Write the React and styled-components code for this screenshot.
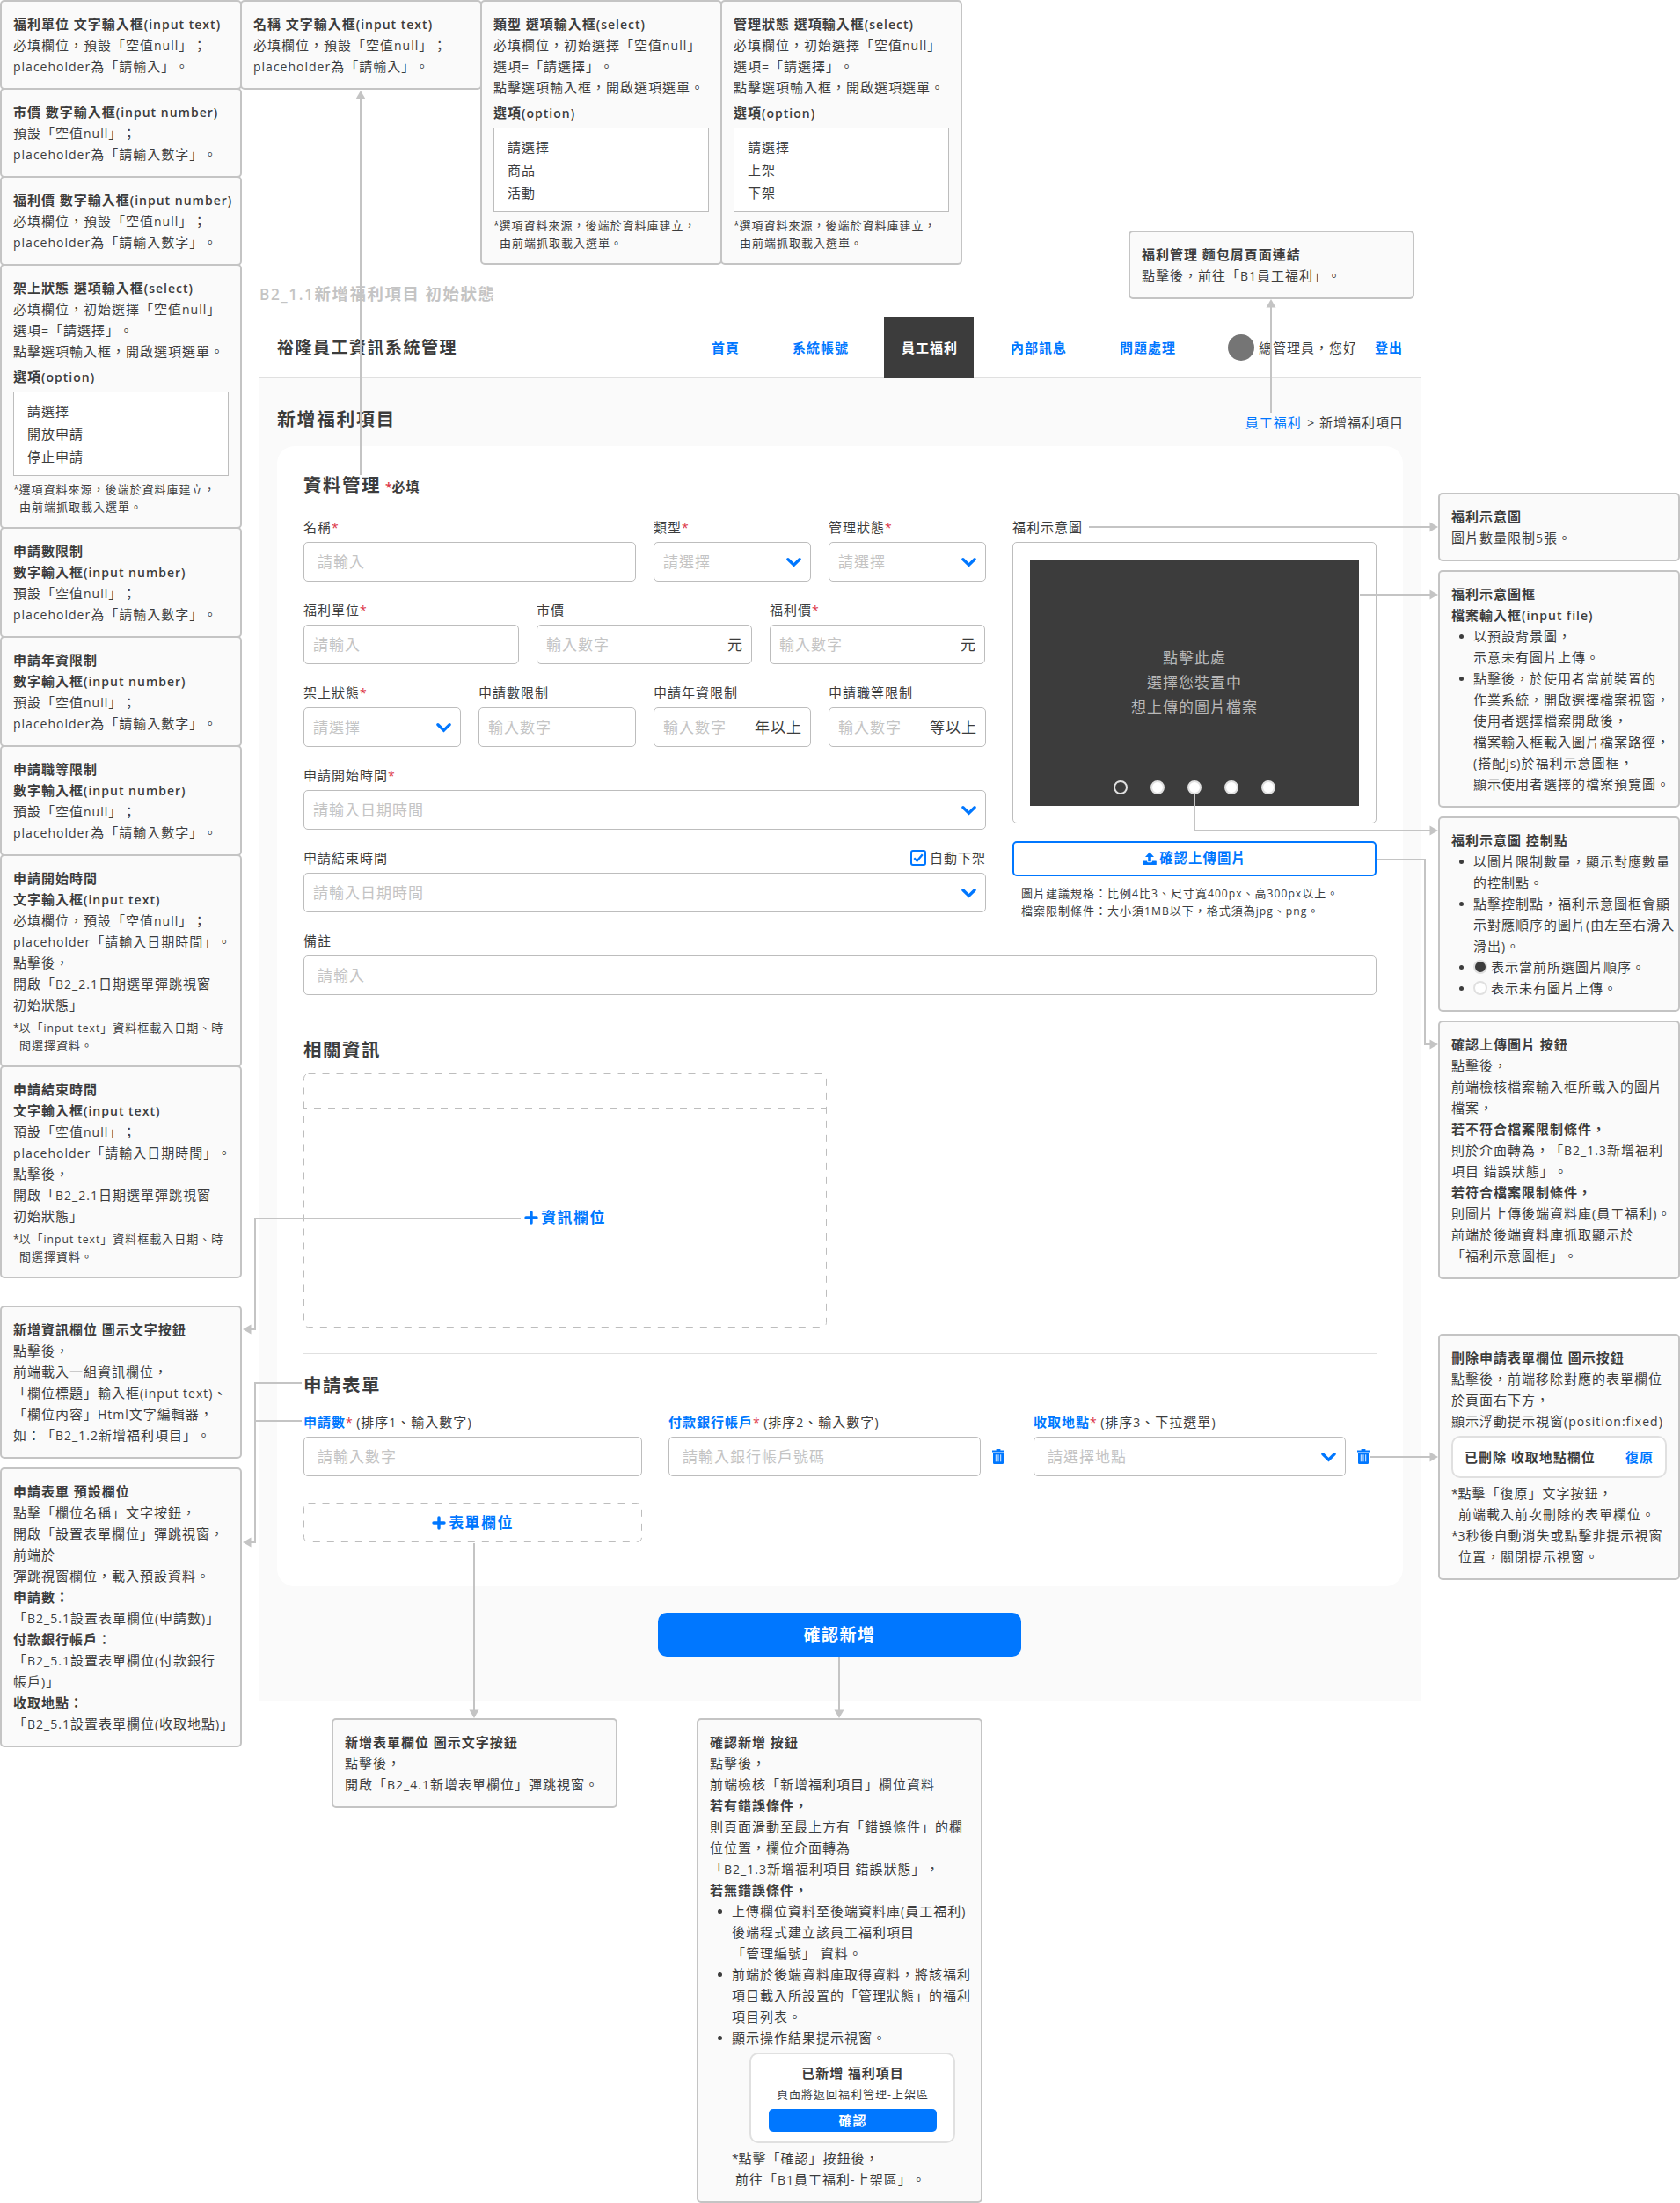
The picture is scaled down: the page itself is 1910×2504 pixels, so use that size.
import React from 'react';
import styled, { createGlobalStyle, css } from 'styled-components';

const ink = '#3c3c3c';
const blue = '#0077ff';
const line = '#c4c4c4';
const edge = '#bdbdbd';
const soft = '#e0e0e0';
const wash = '#fafafa';
const red = '#dc3545';

const GlobalStyle = createGlobalStyle`
  * { box-sizing: border-box; }
  body {
    margin: 0;
    background: #fff;
    color: ${ink};
    font-family: "Open Sans", "Noto Sans CJK TC", sans-serif;
    font-size: 15px;
    line-height: 24px;
    letter-spacing: 1px;
    white-space: nowrap;
    text-spacing-trim: space-all;
  }
`;

/* ---------- text ---------- */

const Latin = styled.span`
  font-size: 0.935em;
  line-height: 1;
  white-space: pre;
`;

const Star = styled.span`
  font-size: 0.935em;
  line-height: 1;
  letter-spacing: -0.2px;
  color: ${(p) => (p.$required ? red : 'inherit')};
`;

function Mixed({ text }) {
  return text
    .split(/(\*|[ -)+-~]+)/)
    .filter(Boolean)
    .map((part, i) => {
      if (part === '*') return <Star key={i}>*</Star>;
      if (/^[ -~]/.test(part)) return <Latin key={i}>{part}</Latin>;
      return <React.Fragment key={i}>{part}</React.Fragment>;
    });
}

/* ---------- board ---------- */

const Board = styled.div`
  position: relative;
  width: 1910px;
  height: 2504px;
  display: flex;
  align-items: flex-start;
  overflow: hidden;
`;

const LeftColumn = styled.div`
  width: 275px;
  flex: none;
  display: flex;
  flex-direction: column;
`;

const Stack = styled.div`
  display: flex;
  flex-direction: column;
  margin-bottom: ${(p) => p.$after || 0}px;
  > * + * { margin-top: ${(p) => p.$gap}px; }
`;

const CenterColumn = styled.div`
  width: 1362px;
  flex: none;
  margin-left: -2px;
  display: flex;
  flex-direction: column;
`;

const RightColumn = styled.div`
  width: 275px;
  flex: none;
  padding-top: 560px;
`;

const TopNotes = styled.div`
  display: flex;
  align-items: flex-start;
  height: 320px;
  > * + * { margin-left: -2px; }
`;

const BreadcrumbNoteSlot = styled.div`
  && { margin: 262px 0 0 189px; }
`;

const BottomNotes = styled.div`
  display: flex;
  align-items: flex-start;
  gap: 90px;
  padding: 20px 0 0 104px;
`;

const Caption = styled.div`
  height: 40px;
  padding-left: 22px;
  font-size: 18.4px;
  line-height: 27px;
  letter-spacing: 1.6px;
  font-weight: 600;
  color: ${line};
`;

/* ---------- notes ---------- */

const Note = styled.section`
  flex: none;
  width: ${(p) => (p.$wide ? 325 : 275)}px;
  padding: 13px;
  border: 2px solid ${line};
  border-radius: 5px;
  background: ${wash};
`;

const NoteTitle = styled.div`
  height: 24px;
  font-weight: 600;
  margin-top: ${(p) => (p.$spaced ? 5 : 0)}px;
`;

const NoteLine = styled.div`
  height: 24px;
  padding-left: ${(p) => p.$indent || 0}px;
`;

const Fine = styled.div`
  margin-top: 4px;
  font-size: 13px;
  line-height: 20px;
`;

const FineLine = styled.div`
  height: 20px;
  padding-left: ${(p) => (p.$hang ? 7 : 0)}px;
`;

const OptionBox = styled.div`
  height: 96px;
  margin: 5px 0;
  padding: 8px 15px;
  border: 1px solid ${edge};
  background: #fff;
  line-height: 26px;
`;

const BulletItem = styled.div`
  display: grid;
  grid-template-columns: 25px 1fr;
`;

const BulletDot = styled.span`
  width: 5px;
  height: 5px;
  margin: 10px 0 0 9px;
  border-radius: 50%;
  background: ${ink};
`;

const StateLine = styled.div`
  display: flex;
  align-items: center;
  gap: 4px;
  height: 24px;
`;

const Dot = styled.span`
  flex: none;
  width: 16px;
  height: 16px;
  border-radius: 50%;
  border: 2px solid ${soft};
  background: ${(p) => (p.$dark ? ink : '#fff')};
`;

const Toast = styled.div`
  display: flex;
  align-items: center;
  justify-content: space-between;
  height: 48px;
  margin: 5px 0;
  padding: 0 13px;
  border: 2px solid ${soft};
  border-radius: 10px;
  background: #fff;
  font-weight: 600;
`;

const TextLink = styled.span`
  color: ${blue};
`;

const MiniDialog = styled.div`
  width: 234px;
  height: 103px;
  margin: 5px 0 5px 45px;
  padding: 9px 19px 10px 20px;
  border: 2px solid ${soft};
  border-radius: 10px;
  background: #fff;
  text-align: center;
`;

const MiniTitle = styled.div`
  height: 25px;
  font-weight: 600;
`;

const MiniText = styled.div`
  height: 22px;
  font-size: 13px;
  line-height: 22px;
`;

const MiniButton = styled.div`
  height: 26px;
  margin-top: 6px;
  border-radius: 5px;
  background: ${blue};
  color: #fff;
  font-weight: 600;
  line-height: 26px;
`;

const Heading = ({ children, spaced }) => (
  <NoteTitle $spaced={spaced}><Mixed text={children} /></NoteTitle>
);

const Lines = ({ items, indent }) =>
  items.map((s, i) => (
    <NoteLine key={i} $indent={indent}><Mixed text={s} /></NoteLine>
  ));

const Remark = ({ items }) => (
  <Fine>
    {items.map((s, i) => (
      <FineLine key={i} $hang={i > 0}><Mixed text={s} /></FineLine>
    ))}
  </Fine>
);

const Bullet = ({ items, children }) => (
  <BulletItem>
    <BulletDot />
    <div>{items ? <Lines items={items} /> : children}</div>
  </BulletItem>
);

const FieldNote = ({ titles, lines, remark }) => (
  <Note>
    {titles.map((s) => <Heading key={s}>{s}</Heading>)}
    <Lines items={lines} />
    {remark && <Remark items={remark} />}
  </Note>
);

const SelectNote = ({ title, options }) => (
  <Note>
    <Heading>{title}</Heading>
    <Lines items={['必填欄位，初始選擇「空值null」', '選項=「請選擇」。', '點擊選項輸入框，開啟選項選單。']} />
    <Heading spaced>選項(option)</Heading>
    <OptionBox>
      {options.map((o) => <div key={o}>{o}</div>)}
    </OptionBox>
    <Remark items={['*選項資料來源，後端於資料庫建立，', '由前端抓取載入選單。']} />
  </Note>
);

/* ---------- application frame ---------- */

const Frame = styled.main`
  width: 1320px;
  height: 1573px;
  margin-left: 22px;
  background: ${wash};
`;

const Header = styled.header`
  display: flex;
  align-items: center;
  height: 70px;
  padding: 0 20px;
  border-bottom: 1px solid ${soft};
  background: #fff;
`;

const Brand = styled.div`
  width: 474px;
  font-size: 19px;
  letter-spacing: 1.5px;
  font-weight: 600;
`;

const Nav = styled.nav`
  display: flex;
  gap: 22px;
  height: 70px;
`;

const NavItem = styled.a`
  height: 70px;
  padding: 0 18px 0 20px;
  line-height: 70px;
  font-weight: 600;
  color: ${(p) => (p.$active ? '#fff' : blue)};
  background: ${(p) => (p.$active ? ink : 'transparent')};
`;

const User = styled.div`
  display: flex;
  align-items: center;
  margin-left: auto;
`;

const Avatar = styled.span`
  width: 30px;
  height: 30px;
  margin: 1px 5px 0 0;
  border-radius: 50%;
  background: #757575;
`;

const Logout = styled.a`
  margin-left: 20px;
  color: ${blue};
  font-weight: 600;
`;

const TitleBar = styled.div`
  display: flex;
  justify-content: space-between;
  align-items: center;
  height: 77px;
  padding: 18px 19px 0 20px;
`;

const PageTitle = styled.h1`
  margin: 0 0 4px;
  font-size: 20.8px;
  letter-spacing: 1.7px;
  font-weight: 600;
`;

const Crumbs = styled.div`
  padding-top: 4px;
  a { color: ${blue}; margin-right: 2px; }
`;

const Panel = styled.div`
  width: 1280px;
  height: 1296px;
  margin: 0 20px;
  padding: 0 30px;
  border-radius: 20px;
  background: #fff;
`;

const SectionTitle = styled.h2`
  display: flex;
  align-items: center;
  height: ${(p) => p.$h}px;
  margin: 0;
  padding-top: ${(p) => p.$top || 0}px;
  font-size: 20.5px;
  letter-spacing: 1.5px;
  font-weight: 600;
`;

const RequiredHint = styled.span`
  margin: 4px 0 0 5px;
  font-size: 15px;
  letter-spacing: 1px;
`;

const Divider = styled.hr`
  height: 1px;
  margin: ${(p) => p.$top}px 0 0;
  border: 0;
  background: ${soft};
`;

const FormTop = styled.div`
  display: flex;
  gap: 30px;
  height: 450px;
`;

const Fields = styled.div`
  width: 776px;
  display: flex;
  flex-direction: column;
  gap: 20px;
`;

const Row = styled.div`
  display: grid;
  grid-template-columns: ${(p) => p.$cols};
  gap: 20px;
`;

const Label = styled.div`
  display: flex;
  justify-content: space-between;
  height: 24px;
  margin-bottom: 5px;
`;

const Control = styled.div`
  display: flex;
  align-items: center;
  justify-content: space-between;
  height: 45px;
  padding: 0 10px 0 ${(p) => (p.$roomy ? 15 : 10)}px;
  border: 1px solid ${edge};
  border-radius: 5px;
  background: #fff;
  font-size: 17px;
`;

const Placeholder = styled.span`
  color: ${line};
`;

const Unit = styled.span`
  margin-right: -1px;
`;

const Auto = styled.span`
  display: flex;
  align-items: center;
  gap: 4px;
`;

const Chevron = () => (
  <svg width="17" height="12" viewBox="0 0 17 12" fill="none">
    <path d="M1.900 2.700 8.500 9.200 15.100 2.700" stroke={blue} strokeWidth="3.300" strokeLinecap="round" />
  </svg>
);

const Plus = () => (
  <svg width="16" height="16" viewBox="0 0 16 16">
    <path d="M8 2v12M2 8h12" stroke={blue} strokeWidth="3.400" strokeLinecap="round" />
  </svg>
);

const Checkbox = () => (
  <svg width="18" height="18" viewBox="0 0 18 18" fill="none" stroke={blue} strokeWidth="2">
    <rect x="1" y="1" width="16" height="16" rx="2" />
    <path d="M4.300 9.200 7.600 12.600 13.800 5.200" strokeWidth="2.300" />
  </svg>
);

const Upload = () => (
  <svg width="16" height="16" viewBox="0 0 16 16" fill={blue}>
    <path d="M8 0.500 13 6H9.800v5.200H6.200V6H3z" />
    <path d="M0.800 10.400h4.400v0.900q0 1 1 1h3.600q1 0 1-1v-0.900h4.400q0.600 0 0.600 0.600v3.400q0 0.600-0.600 0.600H0.800q-0.600 0-0.600-0.600V11q0-0.600 0.600-0.600z" />
  </svg>
);

const Trash = () => (
  <svg width="14" height="17" viewBox="0 0 14 17">
    <path d="M4.600 0h4.800v1.400H14v2H0v-2h4.600z" fill={blue} />
    <path d="M1 4.300h12v11.400q0 1.300-1.300 1.300H2.300Q1 17 1 15.700z" fill={blue} />
    <path d="M4.300 6.300v8M7 6.300v8M9.700 6.300v8" stroke="#fff" strokeWidth="0.900" />
  </svg>
);

const FieldLabel = ({ text, required, extra }) => (
  <Label>
    <span>{text}{required && <Star $required>*</Star>}</span>
    {extra}
  </Label>
);

const Field = ({ label, required, hint, unit, select, roomy, extra }) => (
  <div>
    <FieldLabel text={label} required={required} extra={extra} />
    <Control $roomy={roomy}>
      <Placeholder>{hint}</Placeholder>
      {unit && <Unit>{unit}</Unit>}
      {select && <Chevron />}
    </Control>
  </div>
);

const ImageColumn = styled.div`
  width: 414px;
`;

const Preview = styled.div`
  height: 320px;
  padding: 19px;
  border: 1px solid ${edge};
  border-radius: 5px;
`;

const Slide = styled.div`
  display: flex;
  flex-direction: column;
  align-items: center;
  height: 280px;
  padding-top: 98px;
  background: ${ink};
  color: #b8b8b8;
  font-size: 17px;
  line-height: 28px;
`;

const Dots = styled.div`
  display: flex;
  gap: 26px;
  margin-top: 69px;
`;

const UploadButton = styled.div`
  display: flex;
  align-items: center;
  justify-content: center;
  gap: 3px;
  height: 40px;
  margin-top: 20px;
  border: 2px solid ${blue};
  border-radius: 5px;
  color: ${blue};
  font-size: 15.4px;
  font-weight: 600;
`;

const Specs = styled.div`
  margin: 9px 0 0 10px;
  font-size: 13px;
  line-height: 20px;
`;

const RemarkField = styled.div`
  margin-top: 20px;
`;

const dashedBox = css`
  position: relative;
  display: flex;
  color: ${blue};
  font-size: 17px;
  letter-spacing: 1.4px;
  font-weight: 600;
`;

const InfoBox = styled.div`
  ${dashedBox}
  width: 595px;
  height: 289px;
  padding-top: 39px;
`;

const AddFieldBox = styled.div`
  ${dashedBox}
  width: 385px;
  height: 45px;
  margin-top: 30px;
`;

const DashFrame = styled.svg`
  position: absolute;
  inset: 0;
`;

const AddButton = styled.div`
  flex: 1;
  display: flex;
  align-items: center;
  justify-content: center;
  gap: 3px;
`;

const Dashes = ({ w, h, split }) => (
  <DashFrame width={w} height={h} fill="none" stroke={edge} strokeDasharray="8 8">
    <rect x="0.5" y="0.5" width={w - 1} height={h - 1} rx="5" />
    {split && <path d={`M-4 ${split}.5H${w}`} />}
  </DashFrame>
);

const Application = styled.div`
  display: grid;
  grid-template-columns: repeat(3, 385px);
  gap: 30px;
  width: 1215px;
`;

const ApplicationLabel = styled.div`
  height: 24px;
  margin-bottom: 5px;
  b { color: ${blue}; font-weight: 600; }
`;

const ControlRow = styled.div`
  display: grid;
  grid-template-columns: ${(p) => (p.$removable ? '355px 14px' : '385px')};
  align-items: center;
  gap: 13px;
`;

const ApplicationField = ({ name, order, hint, select, removable }) => (
  <div>
    <ApplicationLabel>
      <b>{name}</b><Star $required>*</Star><Mixed text={order} />
    </ApplicationLabel>
    <ControlRow $removable={removable}>
      <Control $roomy>
        <Placeholder>{hint}</Placeholder>
        {select && <Chevron />}
      </Control>
      {removable && <Trash />}
    </ControlRow>
  </div>
);

const Submit = styled.div`
  width: 413px;
  height: 50px;
  margin: 30px 0 0 453px;
  border-radius: 10px;
  background: ${blue};
  color: #fff;
  text-align: center;
  font-size: 19px;
  line-height: 51px;
  letter-spacing: 1.5px;
  font-weight: 600;
`;

/* ---------- connectors between the screen and its notes ---------- */

const ConnectorLayer = styled.svg`
  position: absolute;
  inset: 0;
  pointer-events: none;
`;

const connectors = [
  { d: 'M410 540V112', tip: [410, 103, 'up'] },
  { d: 'M1445 469V349', tip: [1445, 340, 'up'] },
  { d: 'M1238 599H1626', tip: [1635, 599, 'right'] },
  { d: 'M1546 676H1626', tip: [1635, 676, 'right'] },
  { d: 'M1358 902V944H1626', tip: [1635, 944, 'right'] },
  { d: 'M1565 977H1620V1187H1626', tip: [1635, 1187, 'right'] },
  { d: 'M1557 1656H1626', tip: [1635, 1656, 'right'] },
  { d: 'M592 1385H290V1511H285', tip: [276, 1511, 'left'] },
  { d: 'M343 1572H290V1753H285M290 1615H343', tip: [276, 1753, 'left'] },
  { d: 'M539 1754V1944', tip: [539, 1953, 'down'] },
  { d: 'M954 1883V1944', tip: [954, 1953, 'down'] },
];

const turn = { up: 0, right: 90, down: 180, left: 270 };

const Connectors = () => (
  <ConnectorLayer width="1910" height="2504">
    {connectors.map(({ d, tip: [x, y, dir] }) => (
      <g key={d}>
        <path d={d} fill="none" stroke={line} strokeWidth="2" />
        <path d="M0 0 5.500 9.500H-5.500z" fill={line} transform={`translate(${x} ${y}) rotate(${turn[dir]})`} />
      </g>
    ))}
  </ConnectorLayer>
);

/* ---------- page ---------- */

const Spaced = styled.div`
  margin-top: 62px;
`;

const DeleteNote = () => (
  <Note>
    <Heading>刪除申請表單欄位 圖示按鈕</Heading>
    <Lines items={['點擊後，前端移除對應的表單欄位', '於頁面右下方，', '顯示浮動提示視窗(position:fixed)']} />
    <Toast>
      <span><Mixed text="已刪除 收取地點欄位" /></span>
      <TextLink>復原</TextLink>
    </Toast>
    <Lines items={['*點擊「復原」文字按鈕，']} />
    <Lines items={['前端載入前次刪除的表單欄位。']} indent={8} />
    <Lines items={['*3秒後自動消失或點擊非提示視窗']} />
    <Lines items={['位置，關閉提示視窗。']} indent={8} />
  </Note>
);

const numberLines = ['預設「空值null」；', 'placeholder為「請輸入數字」。'];
const dateLines = ['placeholder「請輸入日期時間」。', '點擊後，', '開啟「B2_2.1日期選單彈跳視窗', '初始狀態」'];
const dateRemark = ['*以「input text」資料框載入日期、時', '間選擇資料。'];

export default function App() {
  return (
    <Board>
      <GlobalStyle />
      <LeftColumn>
        <Stack $gap={-2} $after={31}>
          <FieldNote titles={['福利單位 文字輸入框(input text)']} lines={['必填欄位，預設「空值null」；', 'placeholder為「請輸入」。']} />
          <FieldNote titles={['市價 數字輸入框(input number)']} lines={numberLines} />
          <FieldNote titles={['福利價 數字輸入框(input number)']} lines={['必填欄位，預設「空值null」；', 'placeholder為「請輸入數字」。']} />
          <SelectNote title="架上狀態 選項輸入框(select)" options={['請選擇', '開放申請', '停止申請']} />
          <FieldNote titles={['申請數限制', '數字輸入框(input number)']} lines={numberLines} />
          <FieldNote titles={['申請年資限制', '數字輸入框(input number)']} lines={numberLines} />
          <FieldNote titles={['申請職等限制', '數字輸入框(input number)']} lines={numberLines} />
          <FieldNote titles={['申請開始時間', '文字輸入框(input text)']} lines={['必填欄位，預設「空值null」；', ...dateLines]} remark={dateRemark} />
          <FieldNote titles={['申請結束時間', '文字輸入框(input text)']} lines={['預設「空值null」；', ...dateLines]} remark={dateRemark} />
        </Stack>
        <Stack $gap={10}>
          <FieldNote
            titles={['新增資訊欄位 圖示文字按鈕']}
            lines={['點擊後，', '前端載入一組資訊欄位，', '「欄位標題」輸入框(input text)、', '「欄位內容」Html文字編輯器，', '如：「B2_1.2新增福利項目」。']}
          />
          <Note>
            <Heading>申請表單 預設欄位</Heading>
            <Lines items={['點擊「欄位名稱」文字按鈕，', '開啟「設置表單欄位」彈跳視窗，', '前端於', '彈跳視窗欄位，載入預設資料。']} />
            <Heading>申請數：</Heading>
            <Lines items={['「B2_5.1設置表單欄位(申請數)」']} />
            <Heading>付款銀行帳戶：</Heading>
            <Lines items={['「B2_5.1設置表單欄位(付款銀行', '帳戶)」']} />
            <Heading>收取地點：</Heading>
            <Lines items={['「B2_5.1設置表單欄位(收取地點)」']} />
          </Note>
        </Stack>
      </LeftColumn>

      <CenterColumn>
        <TopNotes>
          <FieldNote titles={['名稱 文字輸入框(input text)']} lines={['必填欄位，預設「空值null」；', 'placeholder為「請輸入」。']} />
          <SelectNote title="類型 選項輸入框(select)" options={['請選擇', '商品', '活動']} />
          <SelectNote title="管理狀態 選項輸入框(select)" options={['請選擇', '上架', '下架']} />
          <BreadcrumbNoteSlot>
            <Note $wide>
              <Heading>福利管理 麵包屑頁面連結</Heading>
              <Lines items={['點擊後，前往「B1員工福利」。']} />
            </Note>
          </BreadcrumbNoteSlot>
        </TopNotes>
        <Caption><Mixed text="B2_1.1新增福利項目 初始狀態" /></Caption>

        <Frame>
          <Header>
            <Brand>裕隆員工資訊系統管理</Brand>
            <Nav>
              <NavItem>首頁</NavItem>
              <NavItem>系統帳號</NavItem>
              <NavItem $active>員工福利</NavItem>
              <NavItem>內部訊息</NavItem>
              <NavItem>問題處理</NavItem>
            </Nav>
            <User>
              <Avatar />
              總管理員，您好
              <Logout>登出</Logout>
            </User>
          </Header>
          <TitleBar>
            <PageTitle>新增福利項目</PageTitle>
            <Crumbs><a>員工福利</a><Mixed text=" > 新增福利項目" /></Crumbs>
          </TitleBar>
          <Panel>
            <SectionTitle $h={80} $top={8}>
              資料管理
              <RequiredHint><Star $required>*</Star>必填</RequiredHint>
            </SectionTitle>
            <FormTop>
              <Fields>
                <Row $cols="378px 179px 179px">
                  <Field label="名稱" required hint="請輸入" roomy />
                  <Field label="類型" required hint="請選擇" select />
                  <Field label="管理狀態" required hint="請選擇" select />
                </Row>
                <Row $cols="245px 245px 245px">
                  <Field label="福利單位" required hint="請輸入" />
                  <Field label="市價" hint="輸入數字" unit="元" />
                  <Field label="福利價" required hint="輸入數字" unit="元" />
                </Row>
                <Row $cols="repeat(4, 179px)">
                  <Field label="架上狀態" required hint="請選擇" select />
                  <Field label="申請數限制" hint="輸入數字" />
                  <Field label="申請年資限制" hint="輸入數字" unit="年以上" />
                  <Field label="申請職等限制" hint="輸入數字" unit="等以上" />
                </Row>
                <Field label="申請開始時間" required hint="請輸入日期時間" select />
                <Field
                  label="申請結束時間"
                  hint="請輸入日期時間"
                  select
                  extra={<Auto><Checkbox />自動下架</Auto>}
                />
              </Fields>
              <ImageColumn>
                <FieldLabel text="福利示意圖" />
                <Preview>
                  <Slide>
                    <div>點擊此處</div>
                    <div>選擇您裝置中</div>
                    <div>想上傳的圖片檔案</div>
                    <Dots><Dot $dark /><Dot /><Dot /><Dot /><Dot /></Dots>
                  </Slide>
                </Preview>
                <UploadButton><Upload />確認上傳圖片</UploadButton>
                <Specs>
                  <div><Mixed text="圖片建議規格：比例4比3、尺寸寬400px、高300px以上。" /></div>
                  <div><Mixed text="檔案限制條件：大小須1MB以下，格式須為jpg、png。" /></div>
                </Specs>
              </ImageColumn>
            </FormTop>
            <RemarkField>
              <Field label="備註" hint="請輸入" roomy />
            </RemarkField>

            <Divider $top={29} />
            <SectionTitle $h={59} $top={4}>相關資訊</SectionTitle>
            <InfoBox>
              <Dashes w={595} h={289} split={39} />
              <AddButton><Plus />資訊欄位</AddButton>
            </InfoBox>

            <Divider $top={29} />
            <SectionTitle $h={65} $top={4}>申請表單</SectionTitle>
            <Application>
              <ApplicationField name="申請數" order=" (排序1、輸入數字)" hint="請輸入數字" />
              <ApplicationField name="付款銀行帳戶" order=" (排序2、輸入數字)" hint="請輸入銀行帳戶號碼" removable />
              <ApplicationField name="收取地點" order=" (排序3、下拉選單)" hint="請選擇地點" select removable />
            </Application>
            <AddFieldBox>
              <Dashes w={385} h={45} />
              <AddButton><Plus />表單欄位</AddButton>
            </AddFieldBox>
          </Panel>
          <Submit>確認新增</Submit>
        </Frame>

        <BottomNotes>
          <Note $wide>
            <Heading>新增表單欄位 圖示文字按鈕</Heading>
            <Lines items={['點擊後，', '開啟「B2_4.1新增表單欄位」彈跳視窗。']} />
          </Note>
          <Note $wide>
            <Heading>確認新增 按鈕</Heading>
            <Lines items={['點擊後，', '前端檢核「新增福利項目」欄位資料']} />
            <Heading>若有錯誤條件，</Heading>
            <Lines items={['則頁面滑動至最上方有「錯誤條件」的欄', '位位置，欄位介面轉為', '「B2_1.3新增福利項目 錯誤狀態」，']} />
            <Heading>若無錯誤條件，</Heading>
            <Bullet items={['上傳欄位資料至後端資料庫(員工福利)', '後端程式建立該員工福利項目', '「管理編號」 資料。']} />
            <Bullet items={['前端於後端資料庫取得資料，將該福利', '項目載入所設置的「管理狀態」的福利', '項目列表。']} />
            <Bullet items={['顯示操作結果提示視窗。']} />
            <MiniDialog>
              <MiniTitle><Mixed text="已新增 福利項目" /></MiniTitle>
              <MiniText><Mixed text="頁面將返回福利管理-上架區" /></MiniText>
              <MiniButton>確認</MiniButton>
            </MiniDialog>
            <Lines items={['*點擊「確認」按鈕後，']} indent={25} />
            <Lines items={['前往「B1員工福利-上架區」。']} indent={29} />
          </Note>
        </BottomNotes>
      </CenterColumn>

      <RightColumn>
        <Stack $gap={10}>
          <FieldNote titles={['福利示意圖']} lines={['圖片數量限制5張。']} />
          <Note>
            <Heading>福利示意圖框</Heading>
            <Heading>檔案輸入框(input file)</Heading>
            <Bullet items={['以預設背景圖，', '示意未有圖片上傳。']} />
            <Bullet items={['點擊後，於使用者當前裝置的', '作業系統，開啟選擇檔案視窗，', '使用者選擇檔案開啟後，', '檔案輸入框載入圖片檔案路徑，', '(搭配js)於福利示意圖框，', '顯示使用者選擇的檔案預覽圖。']} />
          </Note>
          <Note>
            <Heading>福利示意圖 控制點</Heading>
            <Bullet items={['以圖片限制數量，顯示對應數量', '的控制點。']} />
            <Bullet items={['點擊控制點，福利示意圖框會顯', '示對應順序的圖片(由左至右滑入', '滑出)。']} />
            <Bullet><StateLine><Dot $dark />表示當前所選圖片順序。</StateLine></Bullet>
            <Bullet><StateLine><Dot />表示未有圖片上傳。</StateLine></Bullet>
          </Note>
          <Note>
            <Heading>確認上傳圖片 按鈕</Heading>
            <Lines items={['點擊後，', '前端檢核檔案輸入框所載入的圖片', '檔案，']} />
            <Heading>若不符合檔案限制條件，</Heading>
            <Lines items={['則於介面轉為，「B2_1.3新增福利', '項目 錯誤狀態」。']} />
            <Heading>若符合檔案限制條件，</Heading>
            <Lines items={['則圖片上傳後端資料庫(員工福利)。', '前端於後端資料庫抓取顯示於', '「福利示意圖框」。']} />
          </Note>
        </Stack>
        <Spaced>
          <DeleteNote />
        </Spaced>
      </RightColumn>
      <Connectors />
    </Board>
  );
}
